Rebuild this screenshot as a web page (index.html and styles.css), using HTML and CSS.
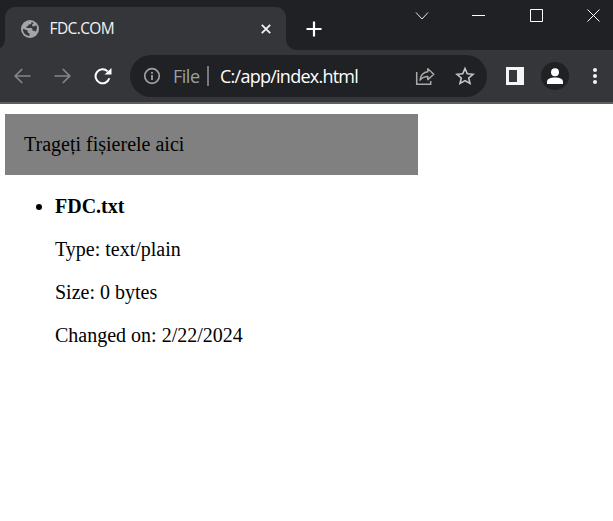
FILE: index.html
```html
<!DOCTYPE html>
<html lang="ro">
<head>
<meta charset="utf-8">
<title>FDC.COM</title>
<link rel="stylesheet" href="styles.css">
</head>
<body>
<header class="tabstrip">
  <div class="tab">
    <svg class="globe" width="18" height="18" viewBox="0 0 18 18"><circle cx="9" cy="9" r="9" fill="#a2a6ab"/><path d="M10.500 2c.2 1.500-.4 2.400-2 2.400-1.200 0-1.300.6-1.300 1.800H5.500v1.900h4.300c1.300 0 1.700.7 1.700 1.700v1h1.300c.9 0 1.300.4 1.600 1.100 1.600-1.800 2-4.500.9-6.600l-2.100 1h-2V4.500L12.800 3c-.7-.5-1.500-.8-2.300-1zM2 8.800l4.600 1.800v1.800l1.900 1.100V16C4.500 15.700 1.700 12.500 2 8.800z" fill="#35363a"/></svg>
    <span class="tab-title">FDC.COM</span>
    <svg class="tab-close" width="10" height="10" viewBox="0 0 10 10"><path d="M.8.8l8.400 8.400M9.200.8L.8 9.200" stroke="#f1f3f4" stroke-width="1.800"/></svg>
  </div>
  <svg class="new-tab" width="16" height="16" viewBox="0 0 16 16"><path d="M8 .5v15M.5 8h15" stroke="#fff" stroke-width="2.200"/></svg>
  <div class="window-controls">
    <svg width="14" height="14" viewBox="0 0 14 14"><path d="M1 3.500L7 10l6-6.500" fill="none" stroke="#e5e6e7"/></svg>
    <svg width="14" height="14" viewBox="0 0 14 14"><path d="M0 6.500h13" stroke="#fff"/></svg>
    <svg width="14" height="14" viewBox="0 0 14 14"><path d="M.5.5h12v12H.5z" fill="none" stroke="#fff"/></svg>
    <svg width="14" height="14" viewBox="0 0 14 14"><path d="M.5.5l12 12M12.500.5l-12 12" stroke="#fff"/></svg>
  </div>
</header>
<nav class="toolbar">
  <svg class="back" width="18" height="18" viewBox="0 0 18 18"><path d="M16.500 9H1.500M8.200 2L1.200 9l7 7" fill="none" stroke="#85868a" stroke-width="1.700"/></svg>
  <svg class="forward" width="18" height="18" viewBox="0 0 18 18"><path d="M.5 9h15M8.800 2l7 7-7 7" fill="none" stroke="#85868a" stroke-width="1.700"/></svg>
  <svg class="reload" width="18" height="18" viewBox="0 0 18 18"><path d="M15.300 11.300A7 7 0 1 1 13.600 4.400" fill="none" stroke="#fff" stroke-width="2"/><path d="M17.500 1v6.500H10.500z" fill="#fff"/></svg>
  <div class="omnibox">
    <svg width="18" height="18" viewBox="0 0 18 18"><circle cx="9" cy="9" r="7.300" fill="none" stroke="#9aa0a6" stroke-width="1.700"/><path d="M9 8v5M9 5v1.700" stroke="#9aa0a6" stroke-width="1.800"/></svg>
    <span class="scheme">File</span>
    <span class="divider"></span>
    <span class="url">C:/app/index.html</span>
    <svg class="share" width="20" height="20" viewBox="0 0 20 20"><path d="M1.700 6v12.300h14V15" fill="none" stroke="#aaa" stroke-width="1.500"/><path d="M12.800 2.700l6 5.500-6 5.500V10.600c-3 0-5.300.9-7.800 3.500C5.600 9.700 8.300 6.300 12.800 5.800z" fill="none" stroke="#aaa" stroke-width="1.500" stroke-linejoin="round"/></svg>
    <svg class="star" width="20" height="20" viewBox="0 0 20 20"><path d="M10 2.600l2.300 5.200 5.700.5-4.300 3.700 1.300 5.500-5-2.900-5 2.900 1.300-5.500L2 8.300l5.700-.5z" fill="none" stroke="#c5c6c8" stroke-width="1.600"/></svg>
  </div>
  <svg class="panel" width="18" height="18" viewBox="0 0 18 18"><path fill-rule="evenodd" d="M0 0h18v18H0zM3 3v12h8V3z" fill="#f5f5f5"/></svg>
  <svg class="avatar" width="28" height="28" viewBox="0 0 28 28"><circle cx="14" cy="14" r="14" fill="#202124"/><circle cx="14" cy="10.300" r="4" fill="#fff"/><path d="M6 22v-2.200c0-3 4-4.300 8-4.300s8 1.300 8 4.300V22z" fill="#fff"/></svg>
  <svg class="more" width="4" height="18" viewBox="0 0 4 18"><g fill="#f5f5f5"><circle cx="2" cy="3" r="2"/><circle cx="2" cy="9" r="2"/><circle cx="2" cy="15" r="2"/></g></svg>
</nav>
<main class="page">
  <div class="drop-zone">Trageți fișierele aici</div>
  <ul class="files">
    <li>
      <strong>FDC.txt</strong>
      <p>Type: text/plain</p>
      <p>Size: 0 bytes</p>
      <p>Changed on: 2/22/2024</p>
    </li>
  </ul>
</main>
</body>
</html>
```

FILE: styles.css
```css
* { box-sizing: border-box; }
body {
  margin: 0;
  height: 521px;
  overflow: hidden;
  background: #fff;
  font-family: "Open Sans", "Noto Sans", sans-serif;
}
svg { display: block; flex: none; }
.tabstrip {
  display: flex;
  height: 50px;
  padding-left: 5px;
  background: #202124;
}
.tab {
  position: relative;
  display: flex;
  align-items: center;
  width: 281px;
  height: 43px;
  margin-top: 7px;
  padding: 0 15px 0 16px;
  border-radius: 10px 10px 0 0;
  background: #35363a;
}
.tab::before,
.tab::after {
  content: "";
  position: absolute;
  bottom: 0;
  width: 10px;
  height: 10px;
}
.tab::before { left: -10px; background: radial-gradient(circle at 0 0, transparent 9.5px, #35363a 10px); }
.tab::after { right: -10px; background: radial-gradient(circle at 100% 0, transparent 9.5px, #35363a 10px); }
.tab-title {
  margin-left: 10.5px;
  padding-bottom: 1px;
  color: #f1f3f4;
  font-size: 15.500px;
  letter-spacing: -0.6px;
}
.tab-close { margin-left: auto; }
.new-tab { margin: 21px 0 0 20px; }
.window-controls {
  display: flex;
  gap: 43.500px;
  margin: 9px 12px 0 auto;
}
.toolbar {
  display: flex;
  align-items: center;
  height: 54px;
  padding: 0 0 0 14px;
  border-bottom: 2px solid #5f6063;
  background: #35363a;
}
.forward { margin-left: 22px; }
.reload { margin-left: 22px; }
.omnibox {
  display: flex;
  align-items: center;
  width: 357px;
  height: 42px;
  margin-left: 18px;
  padding: 0 12px 0 13px;
  border-radius: 21px;
  background: #202124;
  font-size: 18px;
  white-space: nowrap;
}
.scheme { margin-left: 12px; width: 26px; color: #9aa0a6; letter-spacing: -0.5px; }
.divider { width: 2px; height: 20px; margin-left: 8px; background: #77797d; }
.url { margin-left: 11px; color: #fff; letter-spacing: -0.75px; }
.share { margin-left: auto; }
.star { margin-left: 20px; }
.panel { margin-left: 19px; }
.avatar { margin-left: 17px; }
.more { margin-left: 24px; }
.page {
  padding: 10px 0 0 5px;
  color: #000;
  font: 20px/23px "Liberation Serif", serif;
}
.drop-zone {
  width: 413px;
  height: 61px;
  padding: 19px;
  background: #808080;
}
.files { margin: 20px 0 0; padding-left: 50px; }
.files p { margin: 20px 0; }
```
